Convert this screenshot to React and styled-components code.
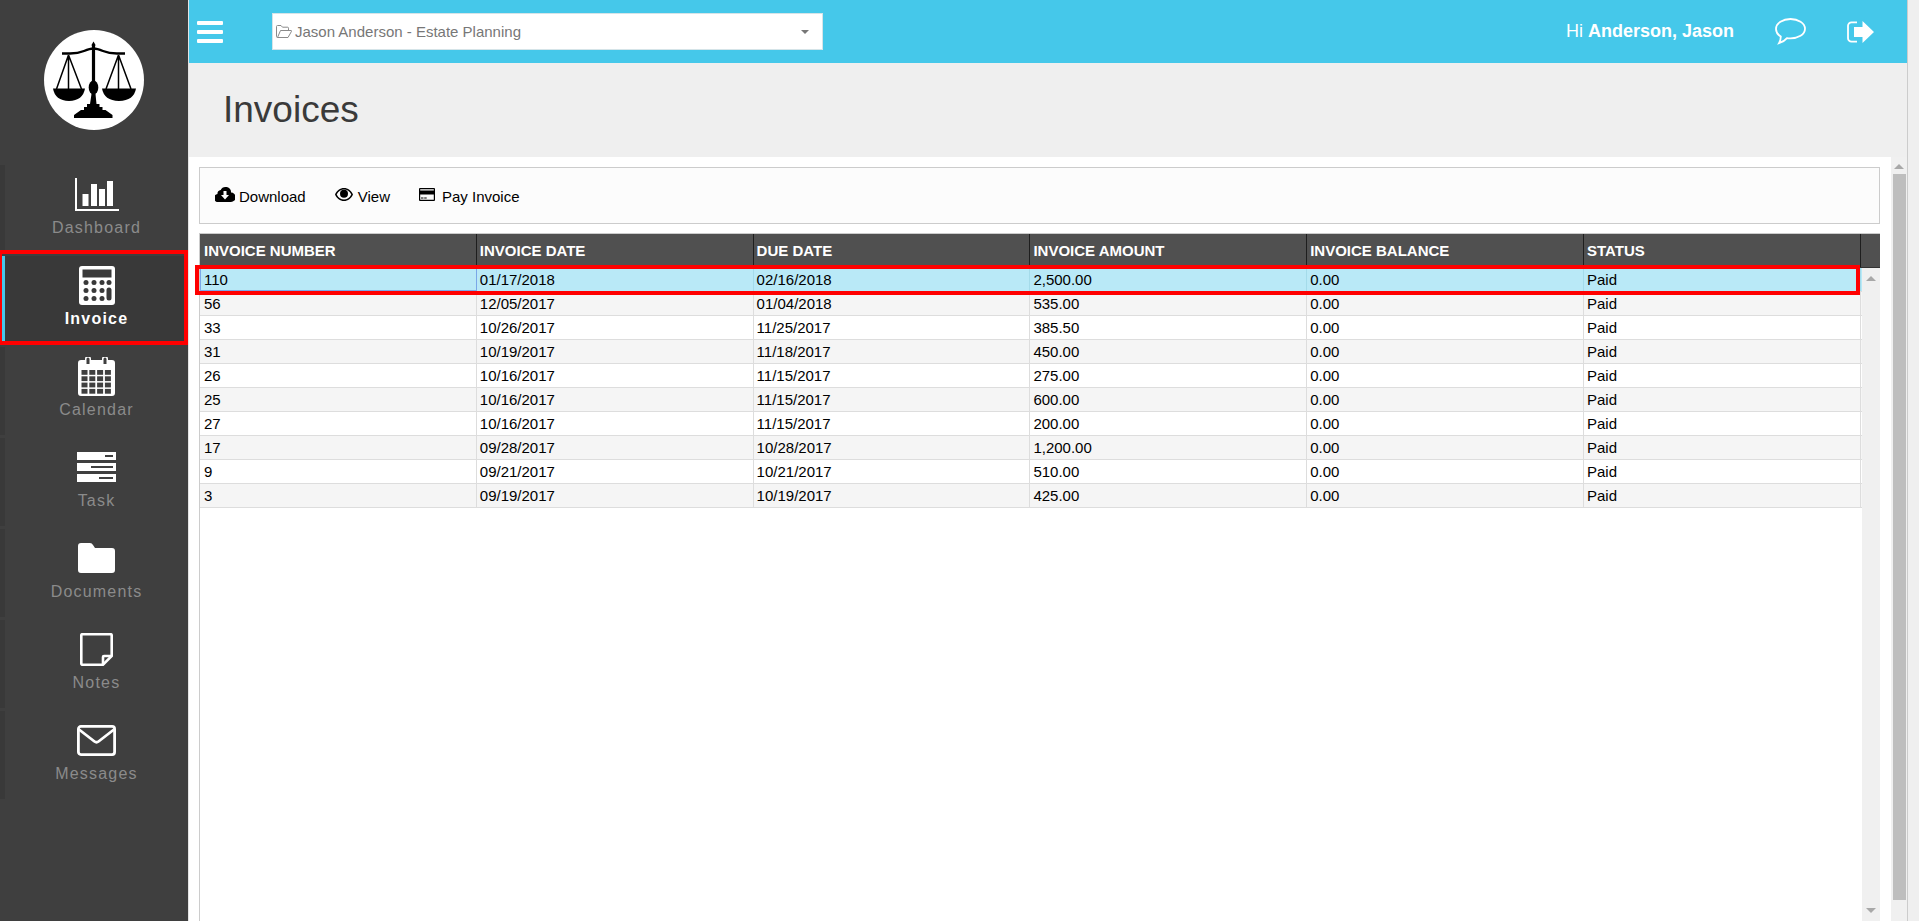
import React from 'react';
import styled, { createGlobalStyle } from 'styled-components';

const GlobalStyle = createGlobalStyle`
  html, body {
    margin: 0;
    padding: 0;
    height: 100%;
    overflow: hidden;
    background: #efefef;
    font-family: "Liberation Sans", Arial, sans-serif;
  }
  * { box-sizing: border-box; }
`;

const Page = styled.div`
  display: flex;
  width: 1919px;
  height: 921px;
  overflow: hidden;
  background: #efefef;
`;

const Sidebar = styled.nav`
  flex: 0 0 188px;
  background: #3f3f3f;
  margin-right: 1px;
  box-shadow: 1px 0 0 #e4e4e4;
`;

const LogoWrap = styled.div`
  height: 165px;
  padding: 30px 0 0 44px;
`;

const Menu = styled.div`
  display: flex;
  flex-direction: column;
  gap: 3px;
`;

const MenuItem = styled.a`
  position: relative;
  display: block;
  height: 88px;
  padding-top: 9px;
  border-left: 5px solid ${p => (p.$active ? '#45c8ea' : '#393939')};
  background: ${p => (p.$active ? '#393939' : 'transparent')};
  text-align: center;
`;

const IconSlot = styled.div`
  display: flex;
  align-items: center;
  justify-content: center;
  height: 40px;
  margin-bottom: 5px;
  svg { display: block; }
`;

const MenuLabel = styled.div`
  font-size: 16px;
  line-height: 18px;
  letter-spacing: 1.2px;
  font-weight: ${p => (p.$active ? 700 : 400)};
  color: ${p => (p.$active ? '#ffffff' : '#8b8b8b')};
`;

const ItemMark = styled.span`
  position: absolute;
  top: -6px;
  left: -7px;
  width: 190px;
  height: 95px;
  border: 4px solid #ff0000;
  pointer-events: none;
`;

const Main = styled.div`
  flex: 0 0 1718px;
  display: flex;
  flex-direction: column;
  border-right: 1px solid #cccccc;
`;

const TopBar = styled.header`
  flex: 0 0 63px;
  display: flex;
  align-items: center;
  padding-left: 8px;
  background: #45c8ea;
  color: #ffffff;
`;

const MenuToggle = styled.div`
  width: 75px;
  svg { display: block; }
`;

const ProjectSelect = styled.div`
  display: flex;
  align-items: center;
  width: 551px;
  height: 37px;
  padding: 0 13px 0 3px;
  background: #ffffff;
  border: 1px solid #d5e4e8;
  font-size: 15px;
  color: #777777;
`;

const ProjectName = styled.span`
  flex: 1;
  margin-left: 3px;
`;

const Caret = styled.span`
  width: 0;
  height: 0;
  border-left: 4px solid transparent;
  border-right: 4px solid transparent;
  border-top: 4px solid #777777;
`;

const UserArea = styled.div`
  display: flex;
  align-items: center;
  margin-left: auto;
  padding-right: 33px;
  svg { display: block; }
`;

const Greeting = styled.span`
  font-size: 18px;
  margin-right: 41px;
  b { font-weight: 700; }
`;

const ChatButton = styled.span`
  margin-right: 41px;
`;

const TitleBar = styled.div`
  flex: 0 0 94px;
  display: flex;
  align-items: center;
  padding: 0 0 0 34px;
`;

const Title = styled.h1`
  margin: 0;
  font-size: 37px;
  font-weight: 400;
  color: #3a3a3a;
`;

const Content = styled.div`
  flex: 1;
  display: flex;
  min-height: 0;
`;

const Panel = styled.div`
  flex: 0 0 1701px;
  display: flex;
  flex-direction: column;
  padding: 10px 11px 0 10px;
  background: #ffffff;
`;

const Toolbar = styled.div`
  flex: 0 0 57px;
  display: flex;
  align-items: center;
  padding: 2px 0 0 15px;
  margin-bottom: 9px;
  background: #fcfcfc;
  border: 1px solid #cccccc;
`;

const ToolButton = styled.button`
  display: flex;
  align-items: center;
  margin-right: 29px;
  padding: 0;
  border: 0;
  background: none;
  font: 15px "Liberation Sans", Arial, sans-serif;
  color: #000000;
  svg { display: block; margin: -5px ${p => p.$gap}px 0 0; }
`;

const Grid = styled.div`
  flex: 1;
  display: flex;
  flex-direction: column;
  min-height: 0;
  border-left: 1px solid #cccccc;
`;

const HeadRow = styled.div`
  flex: 0 0 35px;
  display: flex;
  background: #505050;
  border-top: 1px solid #cccccc;
  border-bottom: 1px solid #333333;
`;

const HeadCell = styled.div`
  flex: 0 0 276.8px;
  padding: 8px 0 0 3px;
  border-right: 1px solid #1e1e1e;
  font-size: 15px;
  line-height: 17px;
  font-weight: 700;
  color: #ffffff;
  &:first-child { padding-left: 4px; }
`;

const GridBody = styled.div`
  flex: 1;
  display: flex;
  min-height: 0;
`;

const Rows = styled.div`
  flex: 0 0 1662px;
`;

const Row = styled.div`
  position: relative;
  z-index: ${p => (p.$selected ? 1 : 0)};
  display: flex;
  height: 24px;
  border-bottom: 1px solid #dddddd;
  background: ${p => (p.$selected ? '#b9e9f7' : p.$odd ? '#f5f5f5' : '#ffffff')};
`;

const Cell = styled.div`
  flex: 0 0 276.8px;
  padding: 3px 0 0 3px;
  border-right: 1px solid ${p => (p.$focused ? '#7aa7e8' : p.$selected ? '#a4dbea' : '#dddddd')};
  box-shadow: ${p => (p.$focused ? 'inset 1px 0 0 #7aa7e8, inset 0 -1px 0 #7aa7e8' : 'none')};
  font-size: 15px;
  line-height: 17px;
  color: #000000;
  &:first-child { padding-left: 4px; }
`;

const RowMark = styled.span`
  position: absolute;
  top: -3px;
  left: -5px;
  width: 1665px;
  height: 30px;
  border: 4px solid #ff0000;
  pointer-events: none;
`;

const ScrollBar = styled.div`
  display: flex;
  flex-direction: column;
  align-items: center;
  background: #f0f0f0;
`;

const GridScroll = styled(ScrollBar)`
  flex: 0 0 18px;
  padding: 8px 0;
  justify-content: space-between;
`;

const PageScroll = styled(ScrollBar)`
  flex: 0 0 16px;
  padding-top: 7px;
`;

const ArrowUp = styled.span`
  width: 0;
  height: 0;
  border-left: 5px solid transparent;
  border-right: 5px solid transparent;
  border-bottom: 5px solid #a8a8a8;
`;

const ArrowDown = styled(ArrowUp)`
  border-bottom: 0;
  border-top: 5px solid #a8a8a8;
`;

const Thumb = styled.div`
  width: 13px;
  height: 726px;
  margin-top: 5px;
  background: #bebebe;
`;

const ScaleLogo = () => (
  <svg width="100" height="100" viewBox="0 0 100 100">
    <circle cx="50" cy="50" r="50" fill="#fff" />
    <g fill="none" stroke="#000">
      <path d="M18 23.5h8q8 0 14-2.500q6-2.500 9.500-2.500q3.500 0 9.500 2.500q6 2.500 14 2.500h8" strokeWidth="2.300" />
      <path d="M24.500 25L12.500 59M24.500 25v34M24.500 25L37.500 59M74.500 25L62 59M74.500 25v34M74.500 25L87 59" strokeWidth="1.500" />
      <path d="M49.500 15v50" strokeWidth="3.200" />
    </g>
    <path d="M49.500 11.500l2 3.500l-2 3.500l-2-3.500z" />
    <path d="M9 58.500h32q-2 12-16 12.500q-14-.5-16-12.500zM58 58.500h34q-2 12-17 12.500q-15-.5-17-12.500z" />
    <ellipse cx="49.500" cy="57.500" rx="4.800" ry="7" />
    <path d="M47.500 64h4l1 10h3v3h3v3h3l7 5v3H30v-3l7-5h3v-3h3v-3h3z" />
  </svg>
);

const BarsIcon = () => (
  <svg width="44" height="33" viewBox="0 0 44 33" fill="#fff">
    <path d="M0 0h2v31h42v2H0z" />
    <rect x="7.500" y="16" width="6" height="12" />
    <rect x="16" y="6" width="6" height="22" />
    <rect x="24" y="11" width="6" height="17" />
    <rect x="32" y="3" width="6" height="25" />
  </svg>
);

const CalcIcon = () => (
  <svg width="36" height="39" viewBox="0 0 36 39">
    <rect width="36" height="39" rx="3" fill="#fff" />
    <rect x="3.500" y="3.500" width="29" height="8" fill="#393939" />
    {[0, 1, 2].map(r => [0, 1, 2].map(c => (
      <circle key={`${r}-${c}`} cx={7 + c * 8} cy={16.500 + r * 8} r="2.500" fill="#393939" />
    )))}
    <circle cx="30" cy="16.500" r="2.500" fill="#393939" />
    <rect x="27.500" y="21.500" width="5" height="13" rx="2.500" fill="#393939" />
  </svg>
);

const CalendarIcon = () => (
  <svg width="37" height="39" viewBox="0 0 37 39">
    <path fill="#fff" d="M3 3h4v-1a3 3 0 0 1 6 0v1h11v-1a3 3 0 0 1 6 0v1h4a3 3 0 0 1 3 3v30a3 3 0 0 1-3 3H3a3 3 0 0 1-3-3V6a3 3 0 0 1 3-3z" />
    <path fill="#3f3f3f" d="M8.500 2a1.500 1.500 0 0 1 3 0v5h-3zM25.500 2a1.500 1.500 0 0 1 3 0v5h-3z" />
    {[0, 1, 2, 3].map(r => [0, 1, 2, 3].map(c => (
      <rect key={`${r}-${c}`} x={3.500 + c * 7.800} y={13 + r * 6.300} width="6" height="4.800" fill="#3f3f3f" />
    )))}
  </svg>
);

const TaskIcon = () => (
  <svg width="39" height="30" viewBox="0 0 39 30">
    <rect width="39" height="8" fill="#fff" />
    <rect y="11" width="39" height="8" fill="#fff" />
    <rect y="22" width="39" height="8" fill="#fff" />
    <rect x="28" y="3" width="8" height="2" fill="#3f3f3f" />
    <rect x="14" y="14" width="22" height="2" fill="#3f3f3f" />
    <rect x="22" y="25" width="14" height="2" fill="#3f3f3f" />
  </svg>
);

const FolderIcon = () => (
  <svg width="37" height="30" viewBox="0 0 37 30" fill="#fff">
    <path d="M3 0h9a4 4 0 0 1 3 2l2 3h17a3 3 0 0 1 3 3v19a3 3 0 0 1-3 3H3a3 3 0 0 1-3-3V3a3 3 0 0 1 3-3z" />
  </svg>
);

const NoteIcon = () => (
  <svg width="33" height="33" viewBox="0 0 33 33" fill="none" stroke="#fff" strokeWidth="2.600">
    <path d="M2 1.300h29a1 1 0 0 1 .7.7V23L23 31.700H2a1 1 0 0 1-.7-.7V2a1 1 0 0 1 .7-.7z" />
    <path d="M23 32v-8a1 1 0 0 1 1-1h8" />
  </svg>
);

const MailIcon = () => (
  <svg width="39" height="31" viewBox="0 0 39 31" fill="none" stroke="#fff" strokeWidth="2.800">
    <rect x="1.400" y="1.400" width="36.200" height="28.200" rx="2.500" />
    <path d="M2 4.500l15.500 12q2 1.500 4 0L37 4.500" />
  </svg>
);

const FolderOpenIcon = () => (
  <svg width="16" height="13" viewBox="0 0 16 13" fill="none" stroke="#8a8a8a" strokeWidth="1">
    <path d="M1.500 12.500a1 1 0 0 1-1-1v-10a1 1 0 0 1 1-1h3.500l1.500 1.700h5a1 1 0 0 1 1 1v2" />
    <path d="M1.500 12.500h10.500l3.500-6.200a.5.500 0 0 0-.5-.8H4.500z" />
  </svg>
);

const HamburgerIcon = () => (
  <svg width="26" height="22" viewBox="0 0 26 22" fill="#fff">
    <rect width="26" height="4" rx="1" />
    <rect y="9" width="26" height="4" rx="1" />
    <rect y="18" width="26" height="4" rx="1" />
  </svg>
);

const ChatIcon = () => (
  <svg width="31" height="27" viewBox="0 0 31 27" fill="none" stroke="#fff" strokeWidth="1.800">
    <path d="M15.500 1C8 1 1 4.800 1 11c0 3.500 2.200 6 4.800 7.600 0 2.200-.6 4.600-1.800 6.600 3-.8 6-2.600 8-5 1 .2 2.300.2 3.500.2C23 20.400 30 16.800 30 10.800 30 4.800 23 1 15.500 1z" />
  </svg>
);

const ExitIcon = () => (
  <svg width="27" height="22" viewBox="0 0 27 22" fill="#fff">
    <path d="M10 1.300H4.500A3.500 3.500 0 0 0 1 4.800v12.400a3.500 3.500 0 0 0 3.500 3.500H10" fill="none" stroke="#fff" strokeWidth="1.800" />
    <path d="M15.500 0L27 11 15.500 22v-6H7V6h8.500z" />
  </svg>
);

const CloudIcon = () => (
  <svg width="20" height="15" viewBox="0 0 20 15">
    <path d="M16 5.600A5 5 0 0 0 10.500 0a5.200 5.200 0 0 0-4.800 3A3.500 3.500 0 0 0 2.500 7 4 4 0 0 0 4 15h12a4.500 4.500 0 0 0 0-9.400z" />
    <path fill="#fcfcfc" d="M8.500 4h3v4h2.500L10 12.500 6 8h2.500z" />
  </svg>
);

const EyeIcon = () => (
  <svg width="18" height="13" viewBox="0 0 18 13">
    <path fillRule="evenodd" d="M9 0c4 0 7.200 2.600 9 6.500C16.200 10.400 13 13 9 13S1.800 10.400 0 6.500C1.800 2.600 5 0 9 0zM9 1.500C6 1.500 3.300 3.300 1.700 6.500 3.300 9.700 6 11.500 9 11.500s5.700-1.800 7.300-5C14.700 3.300 12 1.500 9 1.500z" />
    <circle cx="9" cy="5.800" r="4" />
  </svg>
);

const CardIcon = () => (
  <svg width="16" height="13" viewBox="0 0 16 13">
    <path fillRule="evenodd" d="M1 0h14a1 1 0 0 1 1 1v11a1 1 0 0 1-1 1H1a1 1 0 0 1-1-1V1a1 1 0 0 1 1-1zM1.200 6.500v5.300h13.600V6.500zM1.200 1.200V2.500h13.600V1.200z" />
    <rect x="2" y="9.500" width="2.500" height="1" />
    <rect x="5.200" y="9.500" width="2.500" height="1" />
  </svg>
);

const menu = [
  { label: 'Dashboard', icon: <BarsIcon /> },
  { label: 'Invoice', icon: <CalcIcon />, active: true },
  { label: 'Calendar', icon: <CalendarIcon /> },
  { label: 'Task', icon: <TaskIcon /> },
  { label: 'Documents', icon: <FolderIcon /> },
  { label: 'Notes', icon: <NoteIcon /> },
  { label: 'Messages', icon: <MailIcon /> },
];

const columns = ['INVOICE NUMBER', 'INVOICE DATE', 'DUE DATE', 'INVOICE AMOUNT', 'INVOICE BALANCE', 'STATUS'];

const invoices = [
  ['110', '01/17/2018', '02/16/2018', '2,500.00', '0.00', 'Paid'],
  ['56', '12/05/2017', '01/04/2018', '535.00', '0.00', 'Paid'],
  ['33', '10/26/2017', '11/25/2017', '385.50', '0.00', 'Paid'],
  ['31', '10/19/2017', '11/18/2017', '450.00', '0.00', 'Paid'],
  ['26', '10/16/2017', '11/15/2017', '275.00', '0.00', 'Paid'],
  ['25', '10/16/2017', '11/15/2017', '600.00', '0.00', 'Paid'],
  ['27', '10/16/2017', '11/15/2017', '200.00', '0.00', 'Paid'],
  ['17', '09/28/2017', '10/28/2017', '1,200.00', '0.00', 'Paid'],
  ['9', '09/21/2017', '10/21/2017', '510.00', '0.00', 'Paid'],
  ['3', '09/19/2017', '10/19/2017', '425.00', '0.00', 'Paid'],
];

export default function App() {
  return (
    <Page>
      <GlobalStyle />
      <Sidebar>
        <LogoWrap><ScaleLogo /></LogoWrap>
        <Menu>
          {menu.map(item => (
            <MenuItem key={item.label} $active={item.active}>
              <IconSlot>{item.icon}</IconSlot>
              <MenuLabel $active={item.active}>{item.label}</MenuLabel>
              {item.active && <ItemMark />}
            </MenuItem>
          ))}
        </Menu>
      </Sidebar>
      <Main>
        <TopBar>
          <MenuToggle><HamburgerIcon /></MenuToggle>
          <ProjectSelect>
            <FolderOpenIcon />
            <ProjectName>Jason Anderson - Estate Planning</ProjectName>
            <Caret />
          </ProjectSelect>
          <UserArea>
            <Greeting>Hi <b>Anderson, Jason</b></Greeting>
            <ChatButton><ChatIcon /></ChatButton>
            <ExitIcon />
          </UserArea>
        </TopBar>
        <TitleBar><Title>Invoices</Title></TitleBar>
        <Content>
          <Panel>
            <Toolbar>
              <ToolButton $gap={4}><CloudIcon />Download</ToolButton>
              <ToolButton $gap={5}><EyeIcon />View</ToolButton>
              <ToolButton $gap={7}><CardIcon />Pay Invoice</ToolButton>
            </Toolbar>
            <Grid>
              <HeadRow>
                {columns.map(name => <HeadCell key={name}>{name}</HeadCell>)}
              </HeadRow>
              <GridBody>
                <Rows>
                  {invoices.map((row, i) => (
                    <Row key={row[0]} $selected={i === 0} $odd={i % 2 === 1}>
                      {row.map((value, c) => (
                        <Cell key={c} $selected={i === 0} $focused={i === 0 && c === 0}>{value}</Cell>
                      ))}
                      {i === 0 && <RowMark />}
                    </Row>
                  ))}
                </Rows>
                <GridScroll><ArrowUp /><ArrowDown /></GridScroll>
              </GridBody>
            </Grid>
          </Panel>
          <PageScroll>
            <ArrowUp />
            <Thumb />
          </PageScroll>
        </Content>
      </Main>
    </Page>
  );
}
